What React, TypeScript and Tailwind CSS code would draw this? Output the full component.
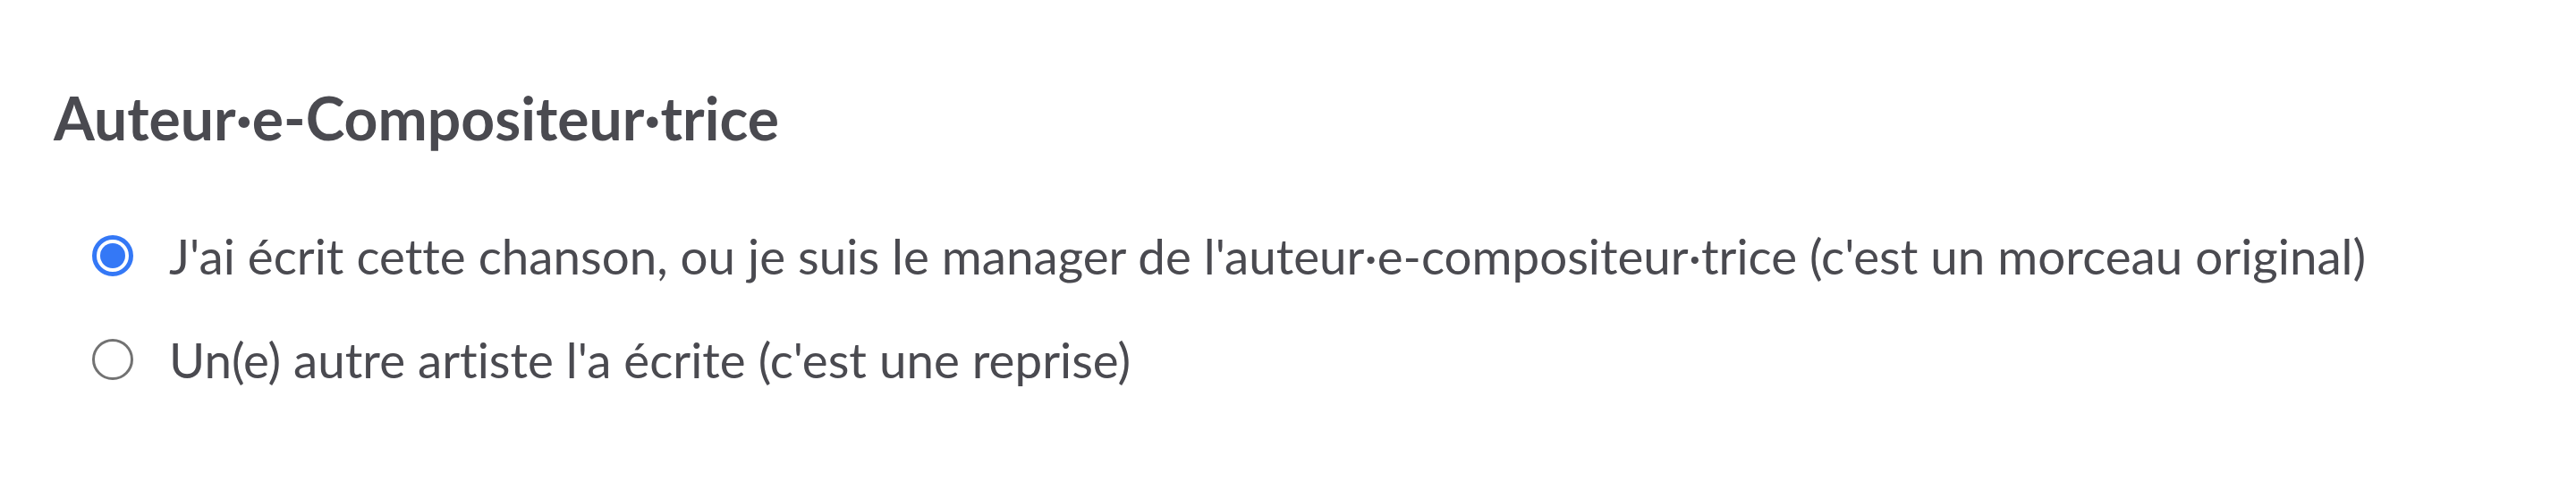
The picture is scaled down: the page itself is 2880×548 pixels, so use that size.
import { useState } from "react";

const OPTIONS = [
  {
    id: "original",
    label:
      "J'ai écrit cette chanson, ou je suis le manager de l'auteur·e-compositeur·trice (c'est un morceau original)",
  },
  { id: "cover", label: "Un(e) autre artiste l'a écrite (c'est une reprise)" },
];

function Radio({ checked }: { checked: boolean }) {
  return checked ? (
    <span className="flex h-[46px] w-[46px] shrink-0 items-center justify-center rounded-full border-[5px] border-[#3478f6] bg-white">
      <span className="h-[28px] w-[28px] rounded-full bg-[#3478f6]" />
    </span>
  ) : (
    <span className="h-[46px] w-[46px] shrink-0 rounded-full border-[3px] border-[#727272] bg-white" />
  );
}

export default function App() {
  const [value, setValue] = useState("original");

  return (
    <div className="h-[548px] w-[2880px] bg-white pl-[60px] pt-[90px] font-['Lato',sans-serif] text-[#4a4a50] [font-variant-ligatures:none]">
      <h2 className="text-[66px] font-bold leading-[84px]">Auteur·e-Compositeur·trice</h2>
      <div className="mt-[79px] flex flex-col gap-[50px] pl-[43px]">
        {OPTIONS.map((o) => (
          <label
            key={o.id}
            className="flex h-[66px] cursor-pointer items-center gap-[40px] text-[54.7px]"
            onClick={() => setValue(o.id)}
          >
            <Radio checked={value === o.id} />
            <span>{o.label}</span>
          </label>
        ))}
      </div>
    </div>
  );
}
